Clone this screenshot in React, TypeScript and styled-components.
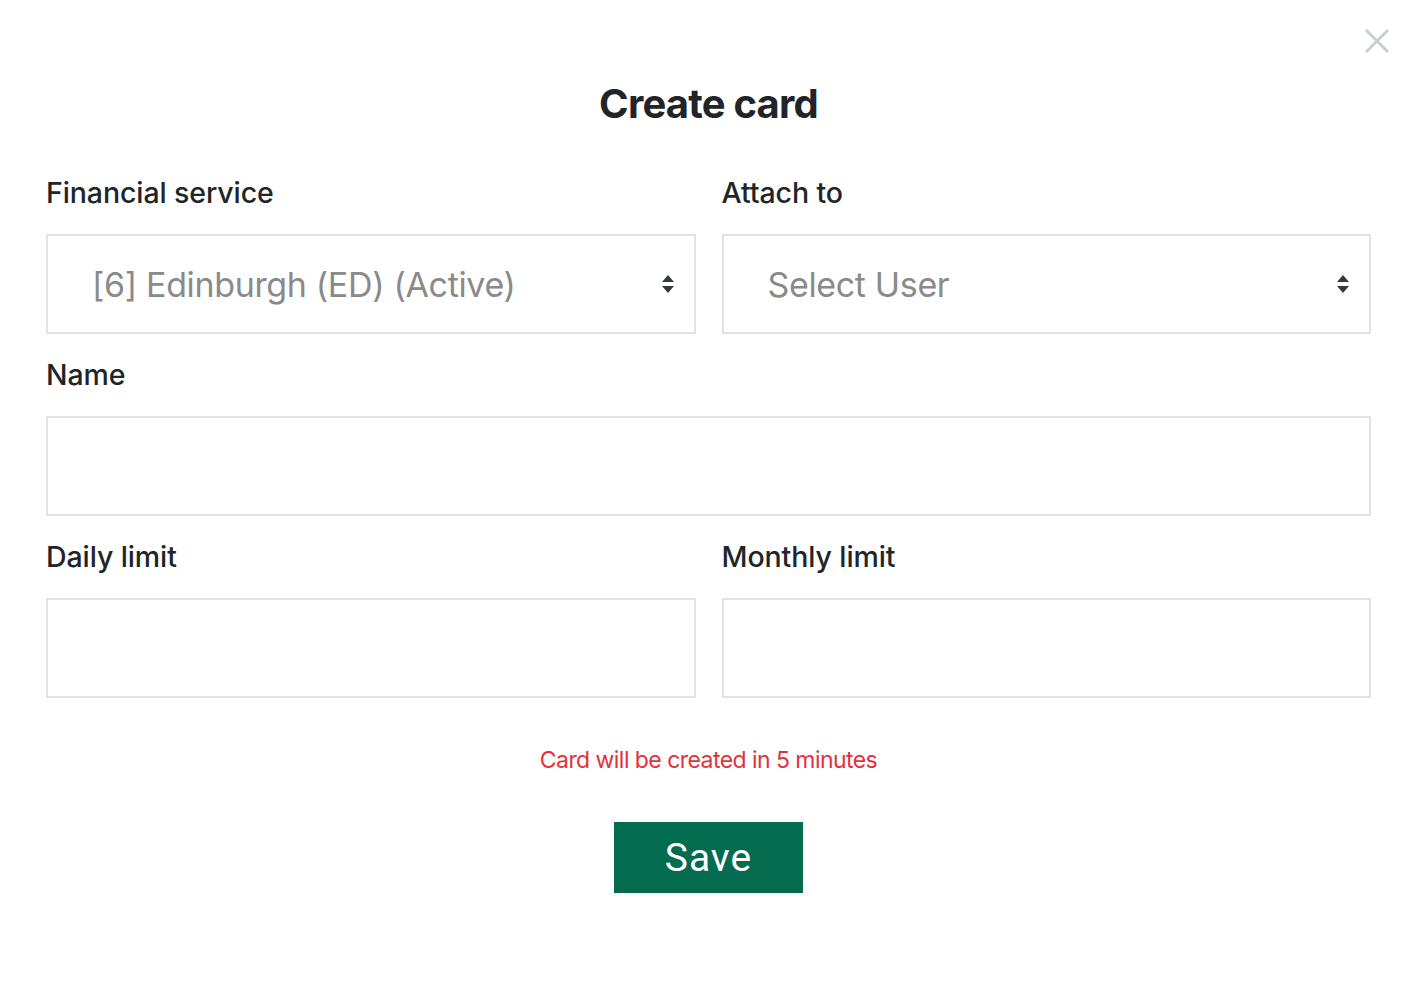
import React from "react";
import styled, { createGlobalStyle } from "styled-components";

const Global = createGlobalStyle`
  html, body { margin: 0; padding: 0; background: #ffffff; }
  body { font-family: Inter, "Noto Sans", sans-serif; color: #212529; }
  * { box-sizing: border-box; }
`;

const Modal = styled.div`
  position: relative;
  width: 1414px;
  min-height: 983px;
  background: #fff;
  padding: 76px 43px 0 46px;
`;

const Close = styled.button`
  position: absolute;
  top: 28px;
  right: 24px;
  width: 26px;
  height: 26px;
  padding: 0;
  border: 0;
  background: transparent;
  cursor: pointer;
  display: flex;
`;

const Title = styled.h2`
  margin: 0 0 43px;
  text-align: center;
  font-size: 40px;
  line-height: 56px;
  font-weight: 700;
  letter-spacing: -0.8px;
  color: #212529;
`;

const Grid = styled.div`
  display: grid;
  grid-template-columns: 1fr 1fr;
  column-gap: 26px;
  row-gap: 23px;
`;

const Field = styled.div<{ $full?: boolean }>`
  display: flex;
  flex-direction: column;
  grid-column: ${(p) => (p.$full ? "1 / -1" : "auto")};
`;

const Label = styled.label`
  font-size: 28.5px;
  line-height: 36px;
  font-weight: 500;
  letter-spacing: -0.1px;
  color: #212529;
  margin-bottom: 23px;
`;

const Box = styled.div`
  height: 100px;
  border: 2px solid #e2e2e2;
  background: #fff;
  display: flex;
  align-items: center;
  padding: 0 19px 0 44px;
`;

const SelectText = styled.span`
  flex: 1;
  font-size: 34px;
  letter-spacing: -0.35px;
  color: #8a8a8a;
`;

const Input = styled.input`
  height: 100px;
  border: 2px solid #e2e2e2;
  background: #fff;
  outline: none;
  padding: 0 24px;
  font-size: 30px;
  font-family: inherit;
`;

const Notice = styled.p`
  margin: 46px 0 0;
  text-align: center;
  font-size: 23px;
  line-height: 32px;
  letter-spacing: -0.55px;
  color: #e3303d;
`;

const Actions = styled.div`
  display: flex;
  justify-content: center;
  margin-top: 46px;
`;

const SaveButton = styled.button`
  width: 189px;
  height: 71px;
  border: 0;
  background: #036b4e;
  color: #fff;
  font-family: Roboto, "Liberation Sans", sans-serif;
  font-size: 39px;
  letter-spacing: 1px;
  cursor: pointer;
`;

const Arrows = () => (
  <svg width="14" height="20" viewBox="0 0 14 20">
    <path d="M7 1 L13 8 H1 Z" fill="#343a40" />
    <path d="M7 19 L13 12 H1 Z" fill="#343a40" />
  </svg>
);

const Select = ({ value }: { value: string }) => (
  <Box>
    <SelectText>{value}</SelectText>
    <Arrows />
  </Box>
);

export default function App() {
  return (
    <>
      <Global />
      <Modal>
        <Close aria-label="Close">
          <svg width="26" height="26" viewBox="0 0 26 26">
            <path d="M2 2 L24 24 M24 2 L2 24" stroke="#c6ccd0" strokeWidth="2.6" />
          </svg>
        </Close>
        <Title>Create card</Title>
        <Grid>
          <Field>
            <Label>Financial service</Label>
            <Select value="[6] Edinburgh (ED) (Active)" />
          </Field>
          <Field>
            <Label>Attach to</Label>
            <Select value="Select User" />
          </Field>
          <Field $full>
            <Label>Name</Label>
            <Input />
          </Field>
          <Field>
            <Label>Daily limit</Label>
            <Input />
          </Field>
          <Field>
            <Label>Monthly limit</Label>
            <Input />
          </Field>
        </Grid>
        <Notice>Card will be created in 5 minutes</Notice>
        <Actions>
          <SaveButton>Save</SaveButton>
        </Actions>
      </Modal>
    </>
  );
}
